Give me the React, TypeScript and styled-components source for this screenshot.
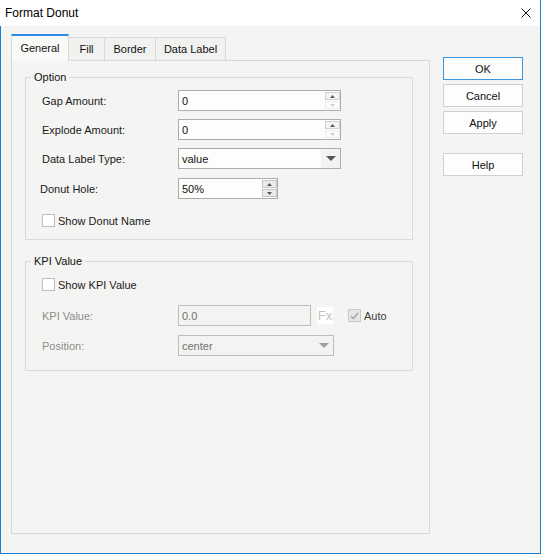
import React from 'react';
import styled, { createGlobalStyle } from 'styled-components';

const GlobalStyle = createGlobalStyle`
  html, body {
    margin: 0;
    padding: 0;
  }

  body {
    font-family: "Liberation Sans", Arial, sans-serif;
    font-size: 11px;
    color: #1a1a1a;
    background: #ffffff;
  }

  * {
    box-sizing: border-box;
  }
`;

const ACCENT = '#1a7fd4';

const Arrow: React.FC<{ dir: 'up' | 'down'; color: string; w?: number; h?: number }> = ({
  dir,
  color,
  w = 5,
  h = 3,
}) => (
  <svg width={w} height={h} viewBox={`0 0 ${w} ${h}`}>
    <polygon
      points={dir === 'up' ? `0,${h} ${w / 2},0 ${w},${h}` : `0,0 ${w},0 ${w / 2},${h}`}
      fill={color}
    />
  </svg>
);

const App: React.FC = () => {
  return (
    <>
      <GlobalStyle />
      <Window>
        <TitleBar>
          <Title>Format Donut</Title>
          <svg width="10" height="10" viewBox="0 0 10 10">
            <path d="M0.5 0.5 L9.5 9.5 M9.5 0.5 L0.5 9.5" stroke="#111" strokeWidth="1" />
          </svg>
        </TitleBar>

        <Body>
          <Main>
            <TabStrip>
              <Tab $active $width={58}>General</Tab>
              <Tab $width={37}>Fill</Tab>
              <Tab $width={52}>Border</Tab>
              <Tab $width={71}>Data Label</Tab>
            </TabStrip>

            <Panel>
              <GroupBox>
                <Legend>Option</Legend>
                <GroupBody $pad="6px 0 12px 16px">
                  <Row>
                    <Label>Gap Amount:</Label>
                    <Field $width={163}>
                      <Value>0</Value>
                      <SpinColumn>
                        <SpinButton>
                          <Arrow dir="up" color="#5c5c5c" />
                        </SpinButton>
                        <SpinButton $faint>
                          <Arrow dir="down" color="#d0d0d0" />
                        </SpinButton>
                      </SpinColumn>
                    </Field>
                  </Row>
                  <Row $top={8}>
                    <Label>Explode Amount:</Label>
                    <Field $width={163}>
                      <Value>0</Value>
                      <SpinColumn>
                        <SpinButton>
                          <Arrow dir="up" color="#5c5c5c" />
                        </SpinButton>
                        <SpinButton $faint>
                          <Arrow dir="down" color="#d0d0d0" />
                        </SpinButton>
                      </SpinColumn>
                    </Field>
                  </Row>
                  <Row $top={8}>
                    <Label>Data Label Type:</Label>
                    <Field $width={163}>
                      <Value>value</Value>
                      <DropButton>
                        <Arrow dir="down" color="#555" w={10} h={5} />
                      </DropButton>
                    </Field>
                  </Row>
                  <Row $top={9}>
                    <Label $shift={-2}>Donut Hole:</Label>
                    <Field $width={100}>
                      <Value>50%</Value>
                      <SpinColumn>
                        <SpinButton $pressed>
                          <Arrow dir="up" color="#555" />
                        </SpinButton>
                        <SpinButton $pressed>
                          <Arrow dir="down" color="#555" />
                        </SpinButton>
                      </SpinColumn>
                    </Field>
                  </Row>
                  <CheckRow $top={15}>
                    <CheckBox />
                    <span>Show Donut Name</span>
                  </CheckRow>
                </GroupBody>
              </GroupBox>

              <GroupBox $top={14}>
                <Legend>KPI Value</Legend>
                <GroupBody $pad="10px 0 14px 16px">
                  <CheckRow>
                    <CheckBox />
                    <span>Show KPI Value</span>
                  </CheckRow>
                  <Row $top={14}>
                    <Label $disabled>KPI Value:</Label>
                    <Field $width={133} $disabled>
                      <Value $disabled>0.0</Value>
                    </Field>
                    <FxBox>Fx</FxBox>
                    <CheckRow $left={15}>
                      <CheckBox $disabled>
                        <svg width="9" height="8" viewBox="0 0 9 8">
                          <path d="M1 4 L3.5 6.5 L8 1" stroke="#a6a6a6" strokeWidth="1.6" fill="none" />
                        </svg>
                      </CheckBox>
                      <AutoText>Auto</AutoText>
                    </CheckRow>
                  </Row>
                  <Row $top={9}>
                    <Label $disabled>Position:</Label>
                    <Field $width={156} $disabled>
                      <Value $disabled>center</Value>
                      <DropButton $disabled>
                        <Arrow dir="down" color="#a0a0a0" w={10} h={5} />
                      </DropButton>
                    </Field>
                  </Row>
                </GroupBody>
              </GroupBox>
            </Panel>
          </Main>

          <ButtonColumn>
            <DialogButton $primary>OK</DialogButton>
            <DialogButton>Cancel</DialogButton>
            <DialogButton>Apply</DialogButton>
            <DialogButton $spaced>Help</DialogButton>
          </ButtonColumn>
        </Body>
      </Window>
    </>
  );
};

const Window = styled('div')`
  width: 541px;
  height: 554px;
  display: flex;
  flex-direction: column;
  background: #f4f5f2;
  border-right: 1px solid ${ACCENT};
  border-bottom: 1px solid ${ACCENT};
`;

const TitleBar = styled('div')`
  flex: none;
  height: 26px;
  display: flex;
  align-items: center;
  justify-content: space-between;
  padding: 0 9px 0 5px;
  background: #ffffff;
`;

const Title = styled('span')`
  font-size: 12px;
  color: #000;
`;

const Body = styled('div')`
  flex: 1;
  display: flex;
  gap: 13px;
  padding: 8px 17px 19px 10px;
  border-left: 1px solid ${ACCENT};
`;

const Main = styled('div')`
  width: 419px;
  display: flex;
  flex-direction: column;
`;

const TabStrip = styled('div')`
  height: 26px;
  display: flex;
  align-items: flex-end;
`;

const Tab = styled('div')<{ $active?: boolean; $width: number }>`
  position: relative;
  z-index: ${(p) => (p.$active ? 1 : 0)};
  width: ${(p) => p.$width}px;
  height: ${(p) => (p.$active ? 27 : 23)}px;
  margin-bottom: ${(p) => (p.$active ? -1 : 0)}px;
  display: flex;
  align-items: center;
  justify-content: center;
  padding-bottom: ${(p) => (p.$active ? 2 : 0)}px;
  border: 1px solid #d9d9d9;
  border-top: ${(p) => (p.$active ? `2px solid #2b8be0` : '1px solid #d9d9d9')};
  border-bottom: none;
  background: ${(p) => (p.$active ? '#f9faf8' : '#f1f2ef')};
  color: #111;

  & + & {
    margin-left: -1px;
  }
`;

const Panel = styled('div')`
  flex: 1;
  display: flex;
  flex-direction: column;
  padding: 9px 16px 0 13px;
  border: 1px solid #d9d9d9;
  background: #f4f5f2;
`;

const GroupBox = styled('fieldset')<{ $top?: number }>`
  margin: ${(p) => p.$top ?? 0}px 0 0 0;
  padding: 0;
  min-width: 0;
  border: 1px solid #dadada;
`;

const Legend = styled('legend')`
  margin-left: 5px;
  padding: 0 3px;
  line-height: 14px;
  font-size: 11px;
  color: #111;
`;

const GroupBody = styled('div')<{ $pad: string }>`
  display: flex;
  flex-direction: column;
  padding: ${(p) => p.$pad};
`;

const Row = styled('div')<{ $top?: number }>`
  display: flex;
  align-items: center;
  height: 21px;
  margin-top: ${(p) => p.$top ?? 0}px;
`;

const Label = styled('span')<{ $shift?: number; $disabled?: boolean }>`
  width: ${(p) => 136 - (p.$shift ?? 0)}px;
  margin-left: ${(p) => p.$shift ?? 0}px;
  color: ${(p) => (p.$disabled ? '#8c8c8c' : '#1a1a1a')};
`;

const Field = styled('div')<{ $width: number; $disabled?: boolean }>`
  width: ${(p) => p.$width}px;
  height: 21px;
  display: flex;
  align-items: stretch;
  border: 1px solid ${(p) => (p.$disabled ? '#bdbdbd' : '#acacac')};
  background: ${(p) => (p.$disabled ? '#f3f4f1' : '#fdfefc')};
`;

const Value = styled('span')<{ $disabled?: boolean }>`
  flex: 1;
  display: flex;
  align-items: center;
  padding-left: 3px;
  color: ${(p) => (p.$disabled ? '#707070' : '#111')};
`;

const SpinColumn = styled('div')`
  display: flex;
  flex-direction: column;
  gap: 1px;
  padding: 1px 0 1px 0;
`;

const SpinButton = styled('div')<{ $faint?: boolean; $pressed?: boolean }>`
  width: 15px;
  height: 8px;
  display: flex;
  align-items: center;
  justify-content: center;
  border: 1px solid ${(p) => (p.$pressed ? '#c6c6c6' : p.$faint ? '#ececec' : '#d2d2d2')};
  background: ${(p) => (p.$pressed ? '#ebebeb' : p.$faint ? '#fbfbfb' : '#f3f3f3')};
`;

const DropButton = styled('div')<{ $disabled?: boolean }>`
  width: 19px;
  display: flex;
  align-items: center;
  justify-content: center;
  background: ${(p) => (p.$disabled ? 'transparent' : '#f3f4f2')};
`;

const CheckRow = styled('label')<{ $top?: number; $left?: number }>`
  display: flex;
  align-items: center;
  gap: 3px;
  height: 13px;
  margin-top: ${(p) => p.$top ?? 0}px;
  margin-left: ${(p) => p.$left ?? 0}px;
  color: #1a1a1a;
`;

const CheckBox = styled('span')<{ $disabled?: boolean }>`
  width: 13px;
  height: 13px;
  display: flex;
  align-items: center;
  justify-content: center;
  border: 1px solid ${(p) => (p.$disabled ? '#c9c9c9' : '#bfbfbf')};
  background: ${(p) => (p.$disabled ? '#e6e6e4' : '#ffffff')};
`;

const AutoText = styled('span')`
  color: #3a3a3a;
`;

const FxBox = styled('span')`
  width: 16px;
  height: 17px;
  margin-left: 6px;
  display: flex;
  align-items: center;
  justify-content: center;
  background: #ffffff;
  font-size: 13px;
  color: #c3c3c3;
`;

const ButtonColumn = styled('div')`
  width: 80px;
  display: flex;
  flex-direction: column;
  gap: 4px;
  padding-top: 23px;
`;

const DialogButton = styled('button')<{ $primary?: boolean; $spaced?: boolean }>`
  height: 23px;
  margin-top: ${(p) => (p.$spaced ? 15 : 0)}px;
  padding: 0;
  border: 1px solid ${(p) => (p.$primary ? '#3b95df' : '#d0d0d0')};
  background: #fdfdfd;
  font-family: "Liberation Sans", Arial, sans-serif;
  font-size: 11px;
  color: #111;
`;

export default App;
